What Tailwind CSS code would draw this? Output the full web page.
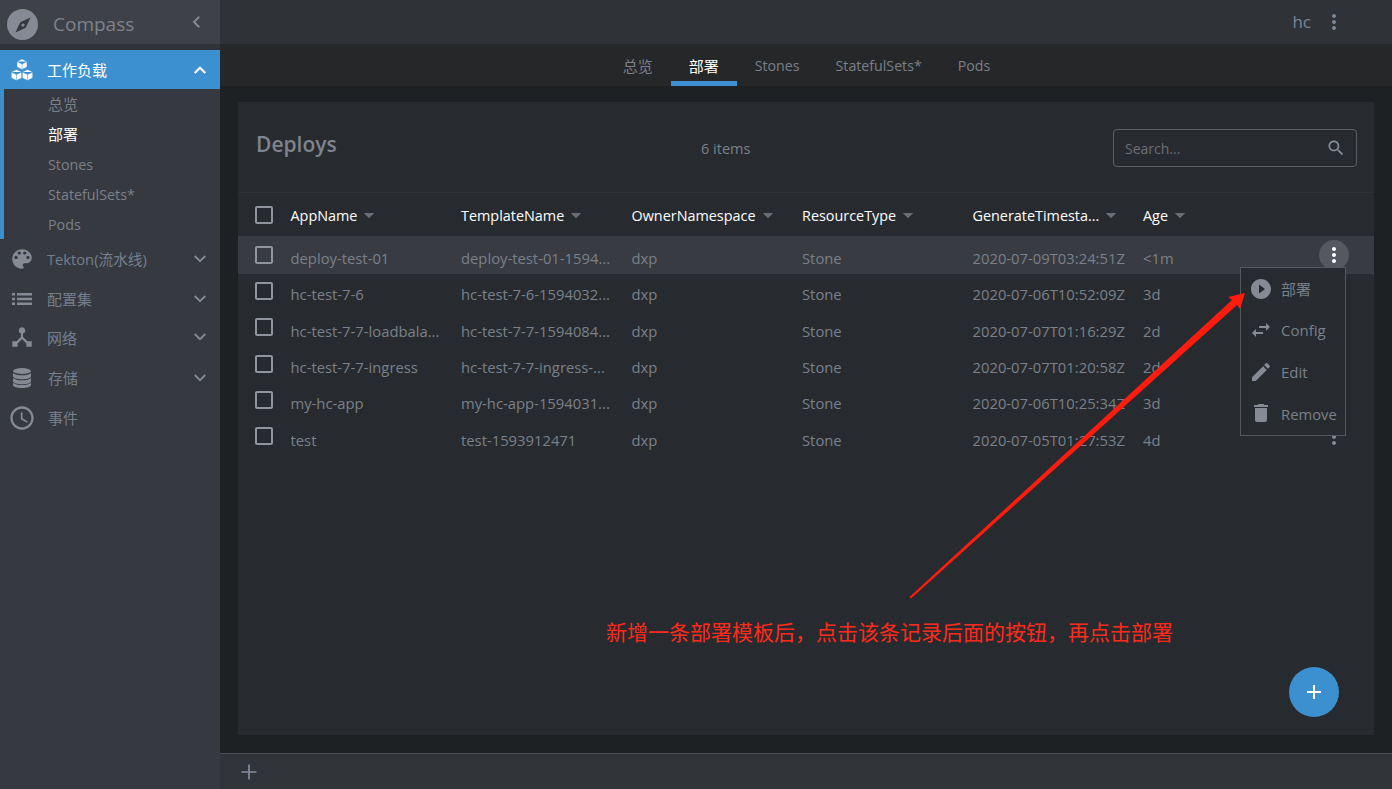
<!DOCTYPE html>
<html lang="zh">
<head>
<meta charset="utf-8">
<title>Compass</title>
<script src="https://cdn.jsdelivr.net/npm/@tailwindcss/browser@4"></script>
</head>
<body class="bg-[#1e2124]">
<div class="relative flex w-[1392px] h-[789px] overflow-hidden font-['Open_Sans','Noto_Sans_CJK_SC',sans-serif] text-[14.8px] text-[#7a808a]">

    <!-- sidebar -->
    <aside class="flex flex-col w-[220px] shrink-0 bg-[#36393f]">
        <div class="relative flex items-center h-[44px] bg-[#3e4147] pt-[5px] pl-[7px] pr-[14px]">
            <div class="relative z-10 flex items-center justify-center w-[31px] h-[31px] rounded-full bg-[#858a94]">
                <svg viewBox="0 0 24 24" class="w-[26px] h-[26px] fill-[#36393f]"><path d="M19 5l-4.500 9.500L5 19l4.500-9.500z"/><circle cx="12" cy="12" r="1.500" fill="#858a94"/></svg>
            </div>
            <span class="ml-[15px] text-[19px] leading-none text-[#7d838c]">Compass</span>
            <svg viewBox="0 0 24 24" class="ml-auto -mt-[6px] w-[18px] h-[18px] fill-none stroke-[#858a94] stroke-[2.6]"><path d="M15 5l-7 7 7 7"/></svg>
        </div>
        <div class="h-[6px] bg-[#2f3237]"></div>
        <div class="flex items-center h-[39px] bg-[#3c90cf] pl-[11px] pr-[11px] text-white">
            <svg viewBox="0 0 22 22" class="w-[22px] h-[22px] fill-white stroke-[#3c90cf] stroke-[0.5]">
                <path d="M11 0l5 2.500V8l-5 2.500L6 8V2.500zM6 2.500L11 5l5-2.500M11 5v5.500"/>
                <path d="M5.500 10.500l5.200 2.500v6l-5.200 2.500L.3 19v-6zM.3 13l5.200 2.500L10.700 13M5.500 15.500v6"/>
                <path d="M16.500 10.500l5.200 2.500v6l-5.200 2.500L11.300 19v-6zM11.300 13l5.200 2.500 5.200-2.500M16.500 15.500v6"/>
            </svg>
            <span class="ml-[14px] pt-[2px] text-[15px]">工作负载</span>
            <svg viewBox="0 0 24 24" class="ml-auto w-[18px] h-[18px] fill-none stroke-white stroke-[3]"><path d="M5 16l7-7 7 7"/></svg>
        </div>
        <div class="flex flex-col border-l-[4px] border-[#3c90cf] pl-[44px] text-[14.3px]">
            <a class="flex items-center h-[30px] text-[15px]">总览</a>
            <a class="flex items-center h-[30px] text-[15px] text-white">部署</a>
            <a class="flex items-center h-[30px] pt-[2px]">Stones</a>
            <a class="flex items-center h-[30px] pt-[2px]">StatefulSets*</a>
            <a class="flex items-center h-[30px] pt-[2px]">Pods</a>
        </div>
        <nav class="flex flex-col text-[15px] text-[#747f8d]">
            <a class="flex items-center h-[39.8px] pl-[9px] pr-[11px]">
                <svg viewBox="0 0 24 24" class="w-[26px] h-[26px] fill-[#858a94]"><path d="M12 3c-4.970 0-9 4.030-9 9s4.030 9 9 9c.83 0 1.500-.67 1.500-1.500 0-.39-.15-.74-.39-1.010-.23-.26-.38-.61-.38-.99 0-.83.67-1.500 1.500-1.500H16c2.760 0 5-2.240 5-5 0-4.420-4.030-8-9-8zm-5.500 9c-.83 0-1.500-.67-1.500-1.500S5.670 9 6.500 9 8 9.670 8 10.500 7.330 12 6.500 12zm3-4C8.670 8 8 7.330 8 6.500S8.670 5 9.500 5s1.500.67 1.500 1.500S10.330 8 9.500 8zm5 0c-.83 0-1.500-.67-1.500-1.500S13.670 5 14.500 5s1.500.67 1.500 1.500S15.330 8 14.500 8zm3 4c-.83 0-1.500-.67-1.500-1.500S16.670 9 17.500 9s1.500.67 1.500 1.500-.67 1.500-1.500 1.500z"/></svg>
                <span class="ml-[12px] text-[14.7px]">Tekton(流水线)</span>
                <svg viewBox="0 0 24 24" class="ml-auto w-[18px] h-[18px] fill-none stroke-[#858a94] stroke-[2.4]"><path d="M5 8l7 7 7-7"/></svg>
            </a>
            <a class="flex items-center h-[39.8px] pl-[12px] pr-[11px]">
                <svg viewBox="0 0 20 12" class="w-[20px] h-[12px] fill-[#858a94]"><path d="M0 0h3v2.500H0zM5 0h15v2.500H5zM0 4.750h3v2.500H0zM5 4.750h15v2.500H5zM0 9.500h3V12H0zM5 9.500h15V12H5z"/></svg>
                <span class="ml-[15px] pt-[2px]">配置集</span>
                <svg viewBox="0 0 24 24" class="ml-auto w-[18px] h-[18px] fill-none stroke-[#858a94] stroke-[2.4]"><path d="M5 8l7 7 7-7"/></svg>
            </a>
            <a class="flex items-center h-[39.8px] pl-[9px] pr-[11px] pb-[2px]">
                <svg viewBox="0 0 24 24" class="w-[26px] h-[26px] fill-[#858a94]"><path d="M17 16l-4-4V8.820C14.160 8.400 15 7.300 15 6c0-1.660-1.340-3-3-3S9 4.340 9 6c0 1.300.84 2.400 2 2.820V12l-4 4H3v5h5v-3.050l4-4.200 4 4.200V21h5v-5h-4z"/></svg>
                <span class="ml-[12px] pt-[2px]">网络</span>
                <svg viewBox="0 0 24 24" class="ml-auto w-[18px] h-[18px] fill-none stroke-[#858a94] stroke-[2.4]"><path d="M5 8l7 7 7-7"/></svg>
            </a>
            <a class="flex items-center h-[39.8px] pl-[13px] pr-[11px] pb-[1px]">
                <svg viewBox="0 0 18 20" class="w-[18px] h-[20px] fill-[#858a94]"><ellipse cx="9" cy="3" rx="9" ry="3"/><path d="M0 5c1.500 1.600 5 2.300 9 2.300S16.500 6.600 18 5v3.200c0 1.700-4 3-9 3s-9-1.300-9-3zM0 10c1.500 1.600 5 2.300 9 2.300s7.500-.7 9-2.300v3.200c0 1.700-4 3-9 3s-9-1.300-9-3zM0 14.800c1.500 1.600 5 2.300 9 2.300s7.500-.7 9-2.300V17c0 1.700-4 3-9 3s-9-1.300-9-3z"/></svg>
                <span class="ml-[17px]">存储</span>
                <svg viewBox="0 0 24 24" class="ml-auto w-[18px] h-[18px] fill-none stroke-[#858a94] stroke-[2.4]"><path d="M5 8l7 7 7-7"/></svg>
            </a>
            <a class="flex items-center h-[39.8px] pl-[8px] pr-[11px]">
                <svg viewBox="0 0 24 24" class="w-[28px] h-[28px] fill-[#858a94]"><path d="M11.990 2C6.470 2 2 6.480 2 12s4.470 10 9.990 10C17.520 22 22 17.520 22 12S17.520 2 11.990 2zM12 20c-4.420 0-8-3.580-8-8s3.580-8 8-8 8 3.580 8 8-3.580 8-8 8zm.5-13H11v6l5.250 3.150.75-1.230-4.500-2.670z"/></svg>
                <span class="ml-[12px]">事件</span>
            </a>
        </nav>
    </aside>

    <!-- main -->
    <div class="flex flex-col flex-1 min-w-0">
        <header class="flex items-center justify-end h-[44px] bg-[#2f3237] pr-[46px] text-[#7b8696]">
            <span class="text-[17px]">hc</span>
            <svg viewBox="0 0 24 24" class="ml-[11px] w-[24px] h-[24px] fill-[#7b8696]"><path d="M12 8c1.100 0 2-.9 2-2s-.9-2-2-2-2 .9-2 2 .9 2 2 2zm0 2c-1.100 0-2 .9-2 2s.9 2 2 2 2-.9 2-2-.9-2-2-2zm0 6c-1.100 0-2 .9-2 2s.9 2 2 2 2-.9 2-2-.9-2-2-2z"/></svg>
        </header>
        <div class="flex justify-center h-[42px] bg-[#262728] pl-[1px] text-[14.2px]">
            <a class="flex items-center px-[18px] h-full pt-[2px] text-[15px]">总览</a>
            <a class="flex items-center px-[18px] h-full pt-[7px] border-b-[5px] border-[#3c90cf] text-[15px] text-white">部署</a>
            <a class="flex items-center px-[18px] h-full pt-[2px]">Stones</a>
            <a class="flex items-center px-[18px] h-full pt-[2px]">StatefulSets*</a>
            <a class="flex items-center px-[18px] h-full pt-[2px]">Pods</a>
        </div>

        <main class="flex-1 px-[18px] pt-[16px] pb-[18px]">
            <section class="relative flex flex-col w-[1136px] h-full bg-[#272b2f]">
                <div class="flex items-start h-[91px] border-b border-[#2e3237]">
                    <h2 class="ml-[18px] mt-[24px] w-[445px] text-[21px] leading-[36px] font-semibold text-[#7e848d]">Deploys</h2>
                    <span class="mt-[36px] text-[14.5px]">6 items</span>
                    <label class="ml-auto mr-[17px] mt-[27px] flex items-center w-[244px] h-[38px] px-[11px] rounded-[4px] border border-[#5b5f64]">
                        <span class="text-[14px] text-[#696e75]">Search...</span>
                        <svg viewBox="0 0 24 24" class="ml-auto -mr-[1px] w-[20px] h-[20px] fill-[#858f9c]"><path d="M15.500 14h-.79l-.28-.27C15.410 12.590 16 11.110 16 9.500 16 5.910 13.090 3 9.500 3S3 5.910 3 9.500 5.910 16 9.500 16c1.610 0 3.090-.59 4.230-1.570l.27.28v.79l5 4.990L20.490 19l-4.990-5zm-6 0C7.010 14 5 11.990 5 9.500S7.010 5 9.500 5 14 7.010 14 9.500 11.990 14 9.500 14z"/></svg>
                    </label>
                </div>

                <!-- table head -->
                <div class="grid grid-cols-[52.5px_repeat(6,170.5px)] items-center h-[43px] pt-[1px] text-[14.4px] text-white">
                    <svg viewBox="0 0 24 24" class="ml-[14px] w-[24px] h-[24px] fill-[#90959d]"><path d="M19 5v14H5V5h14m0-2H5c-1.100 0-2 .9-2 2v14c0 1.100.9 2 2 2h14c1.100 0 2-.9 2-2V5c0-1.100-.9-2-2-2z"/></svg>
                    <span class="flex items-center pt-[2px]">AppName<svg viewBox="0 0 24 24" class="w-[18px] h-[18px] ml-[3px] fill-[#696e75]"><path d="M5 8l7 7 7-7z"/></svg></span>
                    <span class="flex items-center pt-[2px]">TemplateName<svg viewBox="0 0 24 24" class="w-[18px] h-[18px] ml-[3px] fill-[#696e75]"><path d="M5 8l7 7 7-7z"/></svg></span>
                    <span class="flex items-center pt-[2px]">OwnerNamespace<svg viewBox="0 0 24 24" class="w-[18px] h-[18px] ml-[3px] fill-[#696e75]"><path d="M5 8l7 7 7-7z"/></svg></span>
                    <span class="flex items-center pt-[2px]">ResourceType<svg viewBox="0 0 24 24" class="w-[18px] h-[18px] ml-[3px] fill-[#696e75]"><path d="M5 8l7 7 7-7z"/></svg></span>
                    <span class="flex items-center pt-[2px]">GenerateTimesta...<svg viewBox="0 0 24 24" class="w-[18px] h-[18px] ml-[3px] fill-[#696e75]"><path d="M5 8l7 7 7-7z"/></svg></span>
                    <span class="flex items-center pt-[2px]">Age<svg viewBox="0 0 24 24" class="w-[18px] h-[18px] ml-[3px] fill-[#696e75]"><path d="M5 8l7 7 7-7z"/></svg></span>
                </div>

                <!-- rows -->
                <div class="relative grid grid-cols-[52.5px_repeat(6,170.5px)] items-center h-[38px] pt-[6px] bg-[#383b42]">
                    <svg viewBox="0 0 24 24" class="ml-[14px] -mt-[7px] w-[24px] h-[24px] fill-[#90959d]"><path d="M19 5v14H5V5h14m0-2H5c-1.100 0-2 .9-2 2v14c0 1.100.9 2 2 2h14c1.100 0 2-.9 2-2V5c0-1.100-.9-2-2-2z"/></svg>
                    <span class="truncate pr-[18px]">deploy-test-01</span><span class="truncate pr-[18px]">deploy-test-01-1594...</span><span>dxp</span><span>Stone</span><span class="truncate">2020-07-09T03:24:51Z</span><span>&lt;1m</span>
                    <div class="absolute right-[25px] top-[4px] flex items-center justify-center w-[30px] h-[30px] rounded-full bg-[#55585e]">
                        <svg viewBox="0 0 24 24" class="w-[24px] h-[24px] fill-white"><path d="M12 8c1.100 0 2-.9 2-2s-.9-2-2-2-2 .9-2 2 .9 2 2 2zm0 2c-1.100 0-2 .9-2 2s.9 2 2 2 2-.9 2-2-.9-2-2-2zm0 6c-1.100 0-2 .9-2 2s.9 2 2 2 2-.9 2-2-.9-2-2-2z"/></svg>
                    </div>
                </div>
                <div class="grid grid-cols-[52.5px_repeat(6,170.5px)] items-center h-[36.3px] pt-[4px]">
                    <svg viewBox="0 0 24 24" class="ml-[14px] -mt-[6px] w-[24px] h-[24px] fill-[#90959d]"><path d="M19 5v14H5V5h14m0-2H5c-1.100 0-2 .9-2 2v14c0 1.100.9 2 2 2h14c1.100 0 2-.9 2-2V5c0-1.100-.9-2-2-2z"/></svg>
                    <span class="truncate pr-[18px]">hc-test-7-6</span><span class="truncate pr-[18px]">hc-test-7-6-1594032...</span><span>dxp</span><span>Stone</span><span class="truncate">2020-07-06T10:52:09Z</span><span>3d</span>
                </div>
                <div class="grid grid-cols-[52.5px_repeat(6,170.5px)] items-center h-[36.3px] pt-[5px]">
                    <svg viewBox="0 0 24 24" class="ml-[14px] -mt-[7px] w-[24px] h-[24px] fill-[#90959d]"><path d="M19 5v14H5V5h14m0-2H5c-1.100 0-2 .9-2 2v14c0 1.100.9 2 2 2h14c1.100 0 2-.9 2-2V5c0-1.100-.9-2-2-2z"/></svg>
                    <span class="truncate pr-[18px]">hc-test-7-7-loadbala...</span><span class="truncate pr-[18px]">hc-test-7-7-1594084...</span><span>dxp</span><span>Stone</span><span class="truncate">2020-07-07T01:16:29Z</span><span>2d</span>
                </div>
                <div class="grid grid-cols-[52.5px_repeat(6,170.5px)] items-center h-[36.3px] pt-[5px]">
                    <svg viewBox="0 0 24 24" class="ml-[14px] -mt-[7px] w-[24px] h-[24px] fill-[#90959d]"><path d="M19 5v14H5V5h14m0-2H5c-1.100 0-2 .9-2 2v14c0 1.100.9 2 2 2h14c1.100 0 2-.9 2-2V5c0-1.100-.9-2-2-2z"/></svg>
                    <span class="truncate pr-[18px]">hc-test-7-7-ingress</span><span class="truncate pr-[18px]">hc-test-7-7-ingress-...</span><span>dxp</span><span>Stone</span><span class="truncate">2020-07-07T01:20:58Z</span><span>2d</span>
                </div>
                <div class="grid grid-cols-[52.5px_repeat(6,170.5px)] items-center h-[36.3px] pt-[5px]">
                    <svg viewBox="0 0 24 24" class="ml-[14px] -mt-[7px] w-[24px] h-[24px] fill-[#90959d]"><path d="M19 5v14H5V5h14m0-2H5c-1.100 0-2 .9-2 2v14c0 1.100.9 2 2 2h14c1.100 0 2-.9 2-2V5c0-1.100-.9-2-2-2z"/></svg>
                    <span class="truncate pr-[18px]">my-hc-app</span><span class="truncate pr-[18px]">my-hc-app-1594031...</span><span>dxp</span><span>Stone</span><span class="truncate">2020-07-06T10:25:34Z</span><span>3d</span>
                </div>
                <div class="relative grid grid-cols-[52.5px_repeat(6,170.5px)] items-center h-[36.3px] pt-[5px]">
                    <svg viewBox="0 0 24 24" class="ml-[14px] -mt-[7px] w-[24px] h-[24px] fill-[#90959d]"><path d="M19 5v14H5V5h14m0-2H5c-1.100 0-2 .9-2 2v14c0 1.100.9 2 2 2h14c1.100 0 2-.9 2-2V5c0-1.100-.9-2-2-2z"/></svg>
                    <span class="truncate pr-[18px]">test</span><span class="truncate pr-[18px]">test-1593912471</span><span>dxp</span><span>Stone</span><span class="truncate">2020-07-05T01:27:53Z</span><span>4d</span>
                    <svg viewBox="0 0 24 24" class="absolute right-[28px] top-[6px] w-[24px] h-[24px] fill-[#858a94]"><path d="M12 8c1.100 0 2-.9 2-2s-.9-2-2-2-2 .9-2 2 .9 2 2 2zm0 2c-1.100 0-2 .9-2 2s.9 2 2 2 2-.9 2-2-.9-2-2-2zm0 6c-1.100 0-2 .9-2 2s.9 2 2 2 2-.9 2-2-.9-2-2-2z"/></svg>
                </div>

                <!-- row action menu -->
                <div class="absolute left-[1002px] top-[165px] flex flex-col justify-between w-[106px] h-[169px] py-[1px] border border-[#55585c] bg-[#272b2f] text-[15px]">
                    <a class="flex items-center h-[42px] -mt-[1px] pl-[8px]">
                        <svg viewBox="0 0 24 24" class="w-[24px] h-[24px] fill-[#858a94]"><path d="M12 2C6.480 2 2 6.480 2 12s4.480 10 10 10 10-4.480 10-10S17.520 2 12 2zm-2 14.500v-9l6 4.500-6 4.500z"/></svg>
                        <span class="ml-[8px]">部署</span>
                    </a>
                    <a class="flex items-center h-[42px] pl-[8px]">
                        <svg viewBox="0 0 24 24" class="w-[24px] h-[24px] fill-[#858a94]"><path d="M6.990 11L3 15l3.990 4v-3H14v-2H6.990v-3zM21 9l-3.990-4v3H10v2h7.010v3L21 9z"/></svg>
                        <span class="ml-[8px]">Config</span>
                    </a>
                    <a class="flex items-center h-[42px] pl-[8px]">
                        <svg viewBox="0 0 24 24" class="w-[24px] h-[24px] fill-[#858a94]"><path d="M3 17.250V21h3.750L17.810 9.940l-3.750-3.750L3 17.250zM20.710 7.040c.39-.39.39-1.020 0-1.410l-2.340-2.340c-.39-.39-1.020-.39-1.410 0l-1.830 1.830 3.750 3.750 1.830-1.830z"/></svg>
                        <span class="ml-[8px]">Edit</span>
                    </a>
                    <a class="flex items-center h-[42px] pl-[8px]">
                        <svg viewBox="0 0 24 24" class="w-[24px] h-[24px] fill-[#858a94]"><path d="M6 19c0 1.100.9 2 2 2h8c1.100 0 2-.9 2-2V7H6v12zM19 4h-3.500l-1-1h-5l-1 1H5v2h14V4z"/></svg>
                        <span class="ml-[8px] pt-[2px] text-[14.8px]">Remove</span>
                    </a>
                </div>

                <button class="absolute left-[1051px] top-[565px] flex items-center justify-center w-[50px] h-[50px] rounded-full bg-[#3c90cf]">
                    <svg viewBox="0 0 24 24" class="w-[24px] h-[24px] fill-white"><path d="M19 13h-6v6h-2v-6H5v-2h6V5h2v6h6v2z"/></svg>
                </button>
            </section>
        </main>

        <footer class="flex items-center h-[36px] bg-[#303338] border-t border-[#4b4d50] pl-[19px]">
            <svg viewBox="0 0 24 24" class="w-[20px] h-[20px] fill-[#858f9c]"><path d="M21 13h-8v8h-2v-8H3v-2h8V3h2v8h8v2z"/></svg>
        </footer>
    </div>

    <!-- annotation drawn over the screenshot -->
    <svg viewBox="0 0 1392 789" class="absolute left-0 top-0 w-[1392px] h-[789px] pointer-events-none fill-[#ff1c0f]">
        <path d="M909.500 597L1232 300l-4-3 17-4-5 16-3-4L911 598.500z"/>
    </svg>
    <p class="absolute left-[606px] top-[618px] text-[21px] leading-[29px] text-[#ff2a1a] whitespace-nowrap">新增一条部署模板后，点击该条记录后面的按钮，再点击部署</p>
</div>
</body>
</html>
